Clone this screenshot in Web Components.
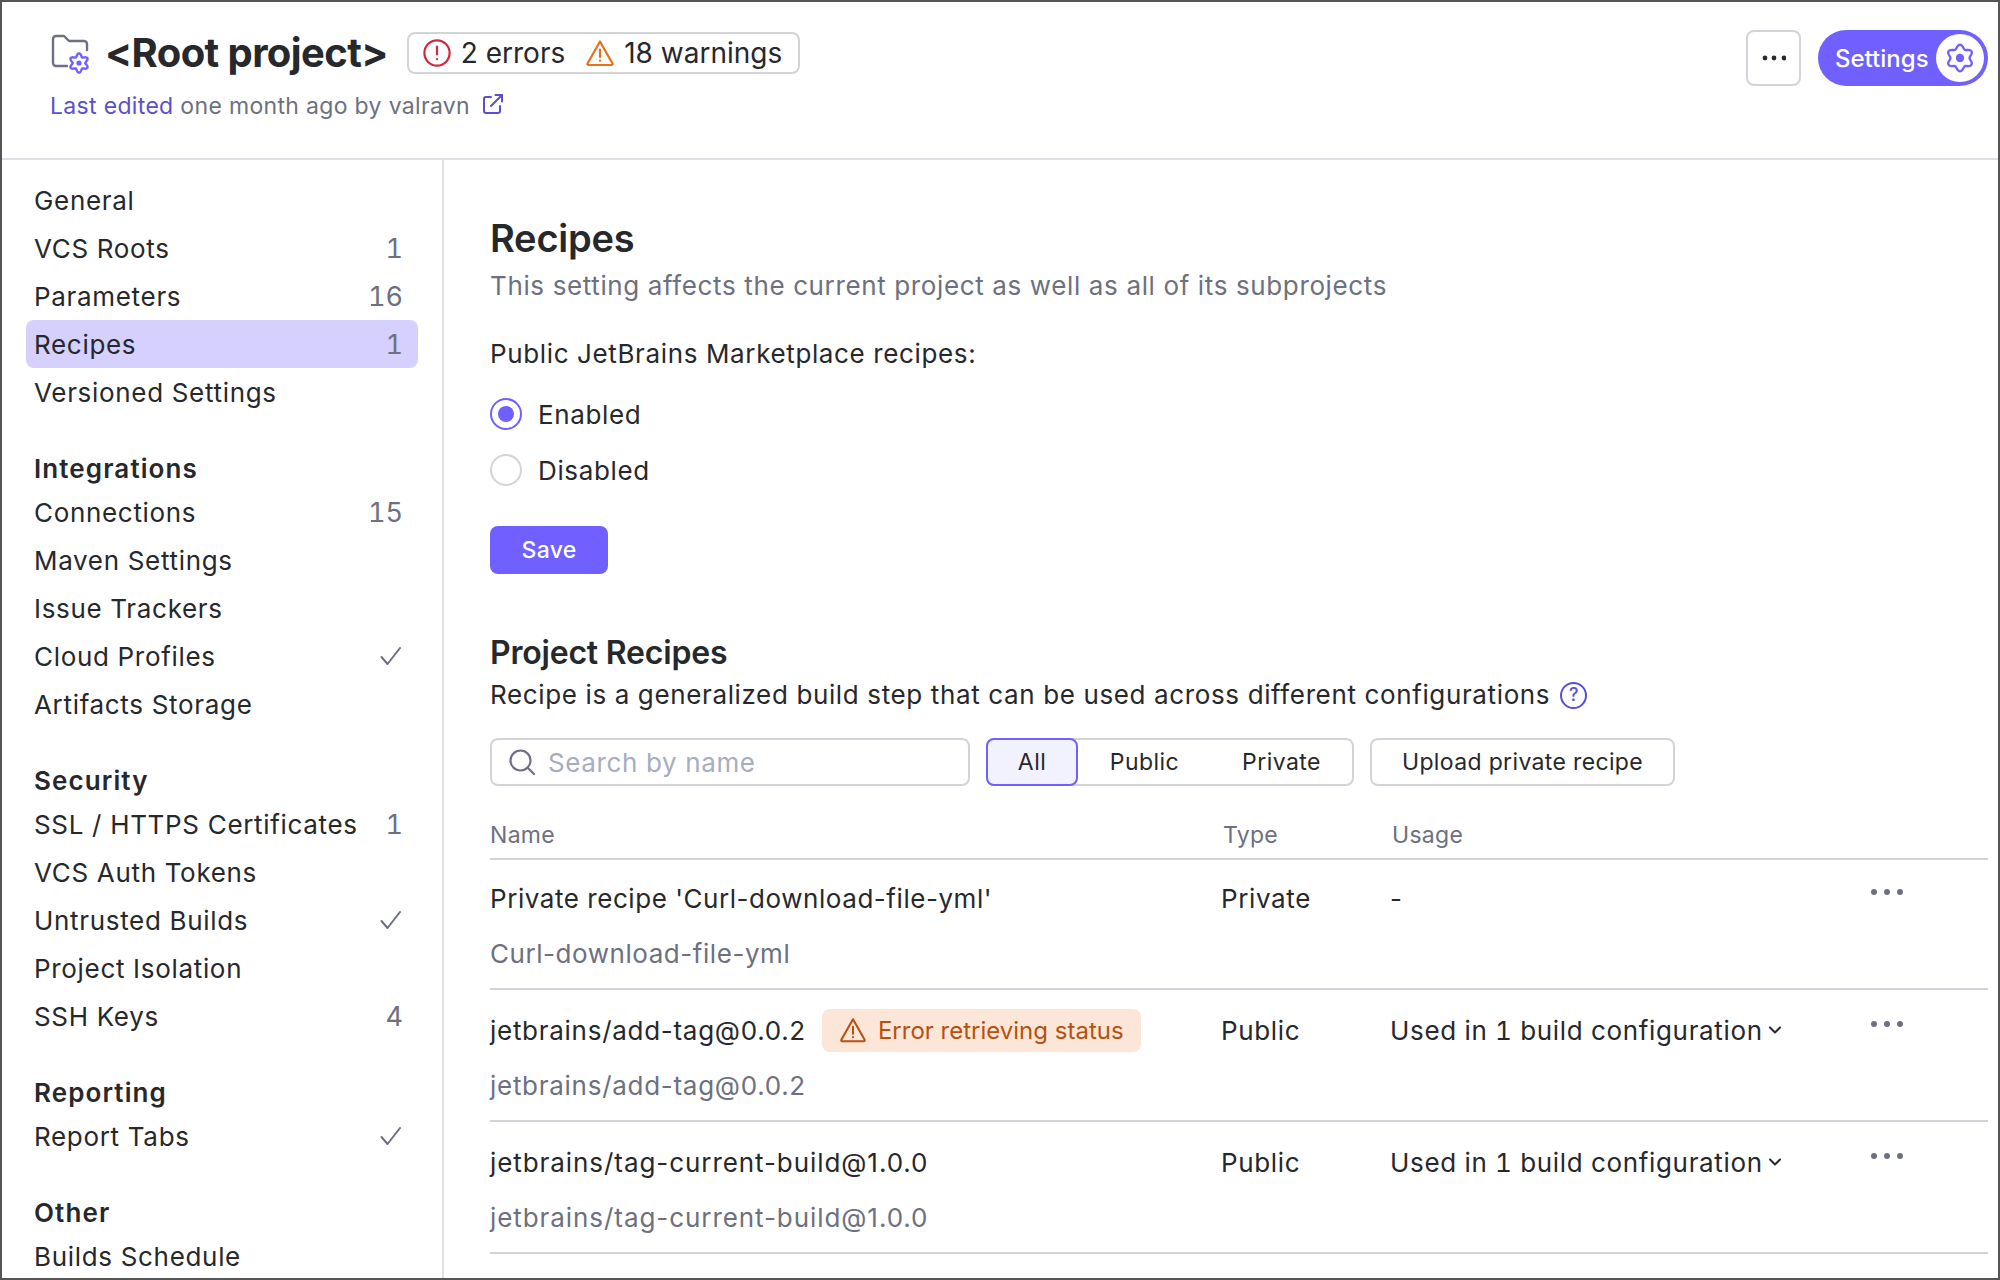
<!DOCTYPE html>
<html>
<head>
<meta charset="utf-8">
<title>Recipes</title>
<style>
  html, body { margin: 0; background: #fff; }
  body { font-family: Inter, "Liberation Sans", sans-serif; font-size: 26px; letter-spacing: 0.63px; color: #27282c; }
</style>
</head>
<body>
<app-frame>
  <page-header slot="header"></page-header>
  <side-nav slot="nav">
    <nav-item>General</nav-item>
    <nav-item count="1">VCS Roots</nav-item>
    <nav-item count="16">Parameters</nav-item>
    <nav-item count="1" active>Recipes</nav-item>
    <nav-item>Versioned Settings</nav-item>
    <nav-heading>Integrations</nav-heading>
    <nav-item count="15">Connections</nav-item>
    <nav-item>Maven Settings</nav-item>
    <nav-item>Issue Trackers</nav-item>
    <nav-item check>Cloud Profiles</nav-item>
    <nav-item>Artifacts Storage</nav-item>
    <nav-heading>Security</nav-heading>
    <nav-item count="1">SSL / HTTPS Certificates</nav-item>
    <nav-item>VCS Auth Tokens</nav-item>
    <nav-item check>Untrusted Builds</nav-item>
    <nav-item>Project Isolation</nav-item>
    <nav-item count="4">SSH Keys</nav-item>
    <nav-heading>Reporting</nav-heading>
    <nav-item check>Report Tabs</nav-item>
    <nav-heading>Other</nav-heading>
    <nav-item>Builds Schedule</nav-item>
  </side-nav>
  <recipes-page slot="main">
    <recipe-row style="--ls: 0.55px" name="Private recipe 'Curl-download-file-yml'" sub="Curl-download-file-yml" type="Private" usage="-"></recipe-row>
    <recipe-row style="--ls: 0.72px" name="jetbrains/add-tag@0.0.2" sub="jetbrains/add-tag@0.0.2" type="Public" usage="Used in 1 build configuration" status="Error retrieving status"></recipe-row>
    <recipe-row style="--ls: 0.93px" name="jetbrains/tag-current-build@1.0.0" sub="jetbrains/tag-current-build@1.0.0" type="Public" usage="Used in 1 build configuration"></recipe-row>
  </recipes-page>
</app-frame>

<script>
// six lobed gear outline, sampled so it stays smooth at any size
function gearPath(cx, cy, r, amp) {
  let d = '';
  for (let i = 0; i < 72; i++) {
    const a = i / 72 * Math.PI * 2;
    const rr = r + amp * Math.cos(6 * (a + Math.PI / 2));
    d += (i ? 'L' : 'M') + (cx + rr * Math.cos(a)).toFixed(2) + ' ' + (cy + rr * Math.sin(a)).toFixed(2);
  }
  return d + 'Z';
}

const warnIcon = (size, color) => `
  <svg width="${size}" height="${size}" viewBox="0 0 30 30" fill="none" stroke="${color}" stroke-width="2.2" stroke-linecap="round" stroke-linejoin="round">
    <path d="M15 3.5 27.5 25.5a1 1 0 0 1-.9 1.5H3.4a1 1 0 0 1-.9-1.5Z"/>
    <path d="M15 11.5v7.5"/><path d="M15 22.6v.2"/>
  </svg>`;

class AppFrame extends HTMLElement {
  constructor() {
    super();
    this.attachShadow({ mode: 'open' });
    this.shadowRoot.innerHTML = `
      <style>
        :host {
          display: grid;
          grid-template-columns: 442px 1fr;
          grid-template-rows: 158px 1fr;
          width: 2000px;
          height: 1280px;
          box-sizing: border-box;
          border: 2px solid #555;
          overflow: hidden;
        }
        .top { grid-column: 1 / 3; border-bottom: 2px solid #e0e0e6; }
        .left { border-right: 2px solid #e0e0e6; overflow: hidden; min-height: 0; }
        .right { overflow: hidden; min-height: 0; }
      </style>
      <div class="top"><slot name="header"></slot></div>
      <div class="left"><slot name="nav"></slot></div>
      <div class="right"><slot name="main"></slot></div>
    `;
  }
}

class PageHeader extends HTMLElement {
  constructor() {
    super();
    this.attachShadow({ mode: 'open' });
    this.shadowRoot.innerHTML = `
      <style>
        :host { display: flex; justify-content: space-between; padding: 28px 10px 0 48px; letter-spacing: 0; }
        .line { display: flex; align-items: center; height: 44px; }
        .folder { margin-right: 13px; }
        h1 { margin: 0; font-size: 40px; font-weight: 700; letter-spacing: -0.6px; }
        .problems {
          display: flex; align-items: center; height: 42px; box-sizing: border-box;
          margin: 2px 0 0 19px; padding: 0 16px 0 13px; gap: 9px;
          border: 2px solid #d3d3da; border-radius: 8px; font-size: 28px;
        }
        .problems svg { display: block; }
        .problems span + svg { margin-left: 11px; }
        .edited { margin-top: 18px; color: #6c7080; font-size: 23px; letter-spacing: 0.33px; display: flex; align-items: center; gap: 12px; }
        .edited b { font-weight: 400; color: #5a4fd0; }
        .edited svg { margin-top: -4px; }
        .actions { display: flex; gap: 17px; }
        .more {
          width: 55px; height: 56px; box-sizing: border-box; border: 2px solid #d3d3da; border-radius: 8px;
          display: flex; align-items: center; justify-content: center;
        }
        .settings {
          display: flex; align-items: center; justify-content: space-between;
          width: 170px; height: 56px; box-sizing: border-box; padding: 0 4px 0 17px;
          border-radius: 28px; background: #6f60ff; color: #fff; font-size: 24px; font-weight: 500;
        }
        .disc { width: 48px; height: 48px; border-radius: 50%; background: #fff; display: flex; align-items: center; justify-content: center; }
      </style>
      <div>
        <div class="line">
          <svg class="folder" width="42" height="44" viewBox="0 0 42 44" fill="none" stroke-linecap="round" stroke-linejoin="round">
            <path d="M17 36H6a3 3 0 0 1-3-3V9a3 3 0 0 1 3-3h8l5 5h15a3 3 0 0 1 3 3v6" stroke="#6c7080" stroke-width="2.4"/>
            <path d="${gearPath(29, 33, 8, 1.7)}" stroke="#6f60ff" stroke-width="2.4"/>
            <circle cx="29" cy="33" r="2.6" fill="#6f60ff"/>
          </svg>
          <h1>&lt;Root project&gt;</h1>
          <div class="problems">
            <svg width="30" height="30" viewBox="0 0 30 30" fill="none" stroke="#d1293d" stroke-width="2.2" stroke-linecap="round">
              <circle cx="15" cy="15" r="12.6"/><path d="M15 8.5v8"/><path d="M15 21v.2"/>
            </svg>
            <span>2 errors</span>
            ${warnIcon(30, '#e8701a')}
            <span>18 warnings</span>
          </div>
        </div>
        <div class="edited">
          <span><b>Last edited</b> one month ago by valravn</span>
          <svg width="22" height="22" viewBox="0 0 22 22" fill="none" stroke="#5a4fd0" stroke-width="2" stroke-linecap="round" stroke-linejoin="round">
            <path d="M9 4H4a2 2 0 0 0-2 2v12a2 2 0 0 0 2 2h12a2 2 0 0 0 2-2v-5"/>
            <path d="M9 13 20 2"/><path d="M13.5 2H20v6.5"/>
          </svg>
        </div>
      </div>
      <div class="actions">
        <div class="more">
          <svg width="24" height="6" viewBox="0 0 24 6" fill="#27282c"><circle cx="3" cy="3" r="2.4"/><circle cx="12" cy="3" r="2.4"/><circle cx="22" cy="3" r="2.4"/></svg>
        </div>
        <div class="settings">
          <span>Settings</span>
          <span class="disc">
            <svg width="30" height="30" viewBox="0 0 30 30" fill="none">
              <path d="${gearPath(15, 15, 11.4, 1.9)}" stroke="#6f60ff" stroke-width="2.3"/>
              <circle cx="15" cy="15" r="4.2" fill="#6f60ff"/>
            </svg>
          </span>
        </div>
      </div>
    `;
  }
}

class SideNav extends HTMLElement {
  constructor() {
    super();
    this.attachShadow({ mode: 'open' });
    this.shadowRoot.innerHTML = `
      <style>
        :host { display: block; padding: 16px 24px 0 24px; letter-spacing: 0.68px; }
      </style>
      <slot></slot>
    `;
  }
}

class NavItem extends HTMLElement {
  constructor() {
    super();
    this.attachShadow({ mode: 'open' });
    const count = this.getAttribute('count');
    const aside = this.hasAttribute('check')
      ? `<svg width="22" height="20" viewBox="0 0 22 20" fill="none" stroke="#6c7080" stroke-width="2" stroke-linecap="round" stroke-linejoin="round"><path d="M1.5 11 7.5 18 20 2"/></svg>`
      : (count ? `<span class="count">${count}</span>` : '');
    this.shadowRoot.innerHTML = `
      <style>
        :host {
          display: flex; align-items: center; justify-content: space-between;
          height: 48px; box-sizing: border-box; padding: 0 16px 0 8px; border-radius: 8px;
          font-size: 26px;
        }
        :host([active]) { background: #d5d0fd; }
        .count { color: #6c7080; font-size: 27px; letter-spacing: 0; margin-right: -1px; font-variant-numeric: tabular-nums; }
      </style>
      <span><slot></slot></span>${aside}
    `;
  }
}

class NavHeading extends HTMLElement {
  constructor() {
    super();
    this.attachShadow({ mode: 'open' });
    this.shadowRoot.innerHTML = `
      <style>
        :host {
          display: flex; align-items: center; height: 40px; margin-top: 32px; padding-left: 8px;
          font-size: 26px; font-weight: 600; letter-spacing: 1.1px;
        }
      </style>
      <slot></slot>
    `;
  }
}

class RadioOption extends HTMLElement {
  constructor() {
    super();
    this.attachShadow({ mode: 'open' });
    this.shadowRoot.innerHTML = `
      <style>
        :host { display: flex; align-items: center; gap: 16px; height: 32px; }
        i { width: 32px; height: 32px; box-sizing: border-box; border-radius: 50%; border: 2px solid #d3d3da; display: flex; align-items: center; justify-content: center; }
        :host([checked]) i { border-color: #6f60ff; }
        :host([checked]) i::after { content: ''; width: 16px; height: 16px; border-radius: 50%; background: #6f60ff; }
      </style>
      <i></i><span><slot></slot></span>
    `;
  }
}

class SearchBox extends HTMLElement {
  constructor() {
    super();
    this.attachShadow({ mode: 'open' });
    this.shadowRoot.innerHTML = `
      <style>
        :host {
          display: flex; align-items: center; gap: 12px; width: 480px; height: 48px; box-sizing: border-box;
          padding-left: 16px; border: 2px solid #d3d3da; border-radius: 8px; color: #a6adbf;
        }
      </style>
      <svg width="28" height="28" viewBox="0 0 28 28" fill="none" stroke="#6c7080" stroke-width="2.2" stroke-linecap="round">
        <circle cx="12.5" cy="12.5" r="10"/><path d="M20 20l6 6"/>
      </svg>
      <span><slot></slot></span>
    `;
  }
}

class FilterGroup extends HTMLElement {
  constructor() {
    super();
    this.attachShadow({ mode: 'open' });
    this.shadowRoot.innerHTML = `
      <style>
        :host {
          display: flex; align-items: center; height: 48px; width: 368px; box-sizing: border-box;
          border: 2px solid #d3d3da; border-radius: 8px; font-size: 23px; letter-spacing: 0.45px;
        }
        div { flex: none; display: flex; align-items: center; justify-content: center; height: 48px; box-sizing: border-box; }
        .on { width: 92px; margin-left: -2px; background: #f2f1fe; border: 2px solid #6f60ff; border-radius: 8px; }
        .pub { width: 133px; }
        .pri { width: 141px; }
      </style>
      <div class="on">All</div><div class="pub">Public</div><div class="pri">Private</div>
    `;
  }
}

class RecipeRow extends HTMLElement {
  constructor() {
    super();
    this.attachShadow({ mode: 'open' });
    const status = this.getAttribute('status');
    const usage = this.getAttribute('usage');
    const used = usage !== '-';
    this.shadowRoot.innerHTML = `
      <style>
        :host {
          display: grid; grid-template-columns: 731px 169px 1fr 118px;
          height: 132px; box-sizing: border-box; padding-top: 16px; border-bottom: 2px solid #d3d3da;
        }
        :host(:first-child) { height: 130px; padding-top: 14px; }
        .name { display: flex; align-items: center; gap: 16px; height: 48px; letter-spacing: var(--ls); }
        .sub { grid-column: 1; color: #6c7080; height: 48px; line-height: 48px; margin-top: -2px; letter-spacing: var(--ls); }
        .cell { display: flex; align-items: center; height: 48px; }
        .usage { gap: 5px; }
        .used { letter-spacing: 0.66px; font-variant-numeric: tabular-nums; }
        .dots { align-self: start; margin-top: 14px; }
        .status {
          display: flex; align-items: center; gap: 11px; height: 43px; padding: 0 17px 0 17px;
          border-radius: 8px; background: #fce6d8; color: #b8500f; font-size: 24px; letter-spacing: 0;
        }
      </style>
      <div class="name"><span>${this.getAttribute('name')}</span>${status ? `<span class="status">${warnIcon(28, '#b8500f')}${status}</span>` : ''}</div>
      <div class="cell">${this.getAttribute('type')}</div>
      <div class="cell usage ${used ? 'used' : ''}">${usage}${used ? `<svg width="14" height="10" viewBox="0 0 14 10" fill="none" stroke="#27282c" stroke-width="2" stroke-linecap="round" stroke-linejoin="round"><path d="M2 2.5 7 7.5 12 2.5"/></svg>` : ''}</div>
      <svg class="dots" width="34" height="8" viewBox="0 0 34 8" fill="#6c7080"><circle cx="4" cy="4" r="3"/><circle cx="17" cy="4" r="3"/><circle cx="30" cy="4" r="3"/></svg>
      <div class="sub">${this.getAttribute('sub')}</div>
    `;
  }
}

class RecipesPage extends HTMLElement {
  constructor() {
    super();
    this.attachShadow({ mode: 'open' });
    this.shadowRoot.innerHTML = `
      <style>
        :host { display: block; padding: 0 10px 0 46px; }
        h2 { margin: 0; padding-top: 54px; font-size: 38px; line-height: 48px; font-weight: 600; letter-spacing: -0.2px; }
        .note { color: #6c7080; line-height: 48px; }
        .label { margin-top: 20px; line-height: 48px; }
        .radios { margin-top: 20px; display: flex; flex-direction: column; gap: 24px; }
        .save {
          display: flex; align-items: center; justify-content: center; width: 118px; height: 48px; margin-top: 40px;
          border-radius: 8px; background: #6f60ff; color: #fff; font-size: 23px; letter-spacing: 0.3px; font-weight: 500;
        }
        h3 { margin: 55px 0 0; font-size: 32px; line-height: 48px; font-weight: 600; letter-spacing: -0.2px; }
        .desc { display: flex; align-items: center; gap: 10px; line-height: 36px; margin-top: 0; }
        .help {
          width: 27px; height: 27px; box-sizing: border-box; border: 2px solid #5a4fd0; border-radius: 50%;
          color: #5a4fd0; font-size: 18px; font-weight: 500; letter-spacing: 0; display: flex; align-items: center; justify-content: center;
        }
        .tools { display: flex; gap: 16px; margin-top: 25px; }
        .upload {
          display: flex; align-items: center; justify-content: center; width: 305px; height: 48px; box-sizing: border-box;
          border: 2px solid #d3d3da; border-radius: 8px; font-size: 23px; letter-spacing: 0.35px;
        }
        .heads {
          display: grid; grid-template-columns: 733px 169px 1fr; height: 74px; box-sizing: border-box; padding-top: 35px;
          border-bottom: 2px solid #d3d3da; color: #6c7080; font-size: 23px; letter-spacing: 0.3px; line-height: 28px;
        }
      </style>
      <h2>Recipes</h2>
      <div class="note">This setting affects the current project as well as all of its subprojects</div>
      <div class="label">Public JetBrains Marketplace recipes:</div>
      <div class="radios">
        <radio-option checked>Enabled</radio-option>
        <radio-option>Disabled</radio-option>
      </div>
      <div class="save">Save</div>
      <h3>Project Recipes</h3>
      <div class="desc">Recipe is a generalized build step that can be used across different configurations <span class="help">?</span></div>
      <div class="tools">
        <search-box>Search by name</search-box>
        <filter-group></filter-group>
        <div class="upload">Upload private recipe</div>
      </div>
      <div class="heads"><span>Name</span><span>Type</span><span>Usage</span></div>
      <slot></slot>
    `;
  }
}

customElements.define('app-frame', AppFrame);
customElements.define('page-header', PageHeader);
customElements.define('side-nav', SideNav);
customElements.define('nav-item', NavItem);
customElements.define('nav-heading', NavHeading);
customElements.define('radio-option', RadioOption);
customElements.define('search-box', SearchBox);
customElements.define('filter-group', FilterGroup);
customElements.define('recipe-row', RecipeRow);
customElements.define('recipes-page', RecipesPage);
</script>
</body>
</html>
